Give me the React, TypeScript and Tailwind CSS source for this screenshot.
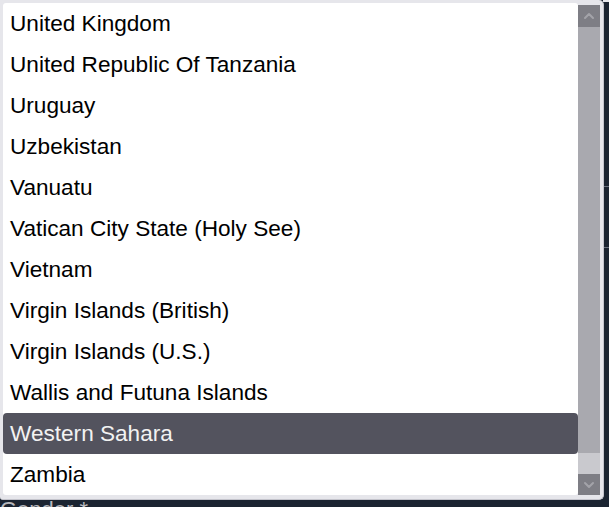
import { ChevronUp, ChevronDown } from 'lucide-react';

const countries = [
  'United Kingdom',
  'United Republic Of Tanzania',
  'Uruguay',
  'Uzbekistan',
  'Vanuatu',
  'Vatican City State (Holy See)',
  'Vietnam',
  'Virgin Islands (British)',
  'Virgin Islands (U.S.)',
  'Wallis and Futuna Islands',
  'Western Sahara',
  'Zambia',
];

const selected = 'Western Sahara';

export default function App() {
  return (
    <div
      className="relative w-[609px] h-[507px] overflow-hidden bg-[#1b2431]"
      style={{ fontFamily: '"Liberation Sans", Arial, sans-serif' }}
    >
      {/* page behind the popup */}
      <div className="absolute top-0 right-0 w-[6px] h-[2px] bg-[#e9e9ee]" />
      <div className="absolute top-[186px] right-0 w-[5px] h-px bg-[#6b7280]" />
      <div className="absolute top-[247px] right-0 w-[5px] h-px bg-[#6b7280]" />
      <div className="absolute top-[499px] left-0 text-[22px] leading-[22px] text-[#b8b8bd]">Gender *</div>

      {/* dropdown popup */}
      <div className="absolute top-0 left-0 w-[604px] h-[500px] flex bg-[#e6e6eb] border-r border-b border-[#c4c4cc] rounded-r-[5px] rounded-bl-[3px] pt-[3px] pl-[3px] pr-[3px] pb-[4px]">
        <ul className="w-[575px] h-[492px] bg-white rounded-[3px] overflow-hidden">
          {countries.map((name) => (
            <li
              key={name}
              className={
                name === selected
                  ? 'h-[41px] flex items-center pl-[7px] text-[22.6px] text-[#f2f2f2] bg-[#53535e] rounded-[4px]'
                  : 'h-[41px] flex items-center pl-[7px] text-[22.6px] text-black'
              }
            >
              {name}
            </li>
          ))}
        </ul>
        <div className="w-[22px] h-[492px] flex flex-col pt-[2px]">
          <div className="h-[22px] bg-[#7e7e85] flex items-center justify-center">
            <ChevronUp className="w-[16px] h-[16px] text-[#a3a3a9]" strokeWidth={3} />
          </div>
          <div className="flex-1 flex flex-col bg-[#c9c9ce]">
            <div className="h-[426px] bg-[#a9a9af]" />
          </div>
          <div className="h-[21px] bg-[#7e7e85] flex items-center justify-center">
            <ChevronDown className="w-[16px] h-[16px] text-[#a3a3a9]" strokeWidth={3} />
          </div>
        </div>
      </div>
    </div>
  );
}
